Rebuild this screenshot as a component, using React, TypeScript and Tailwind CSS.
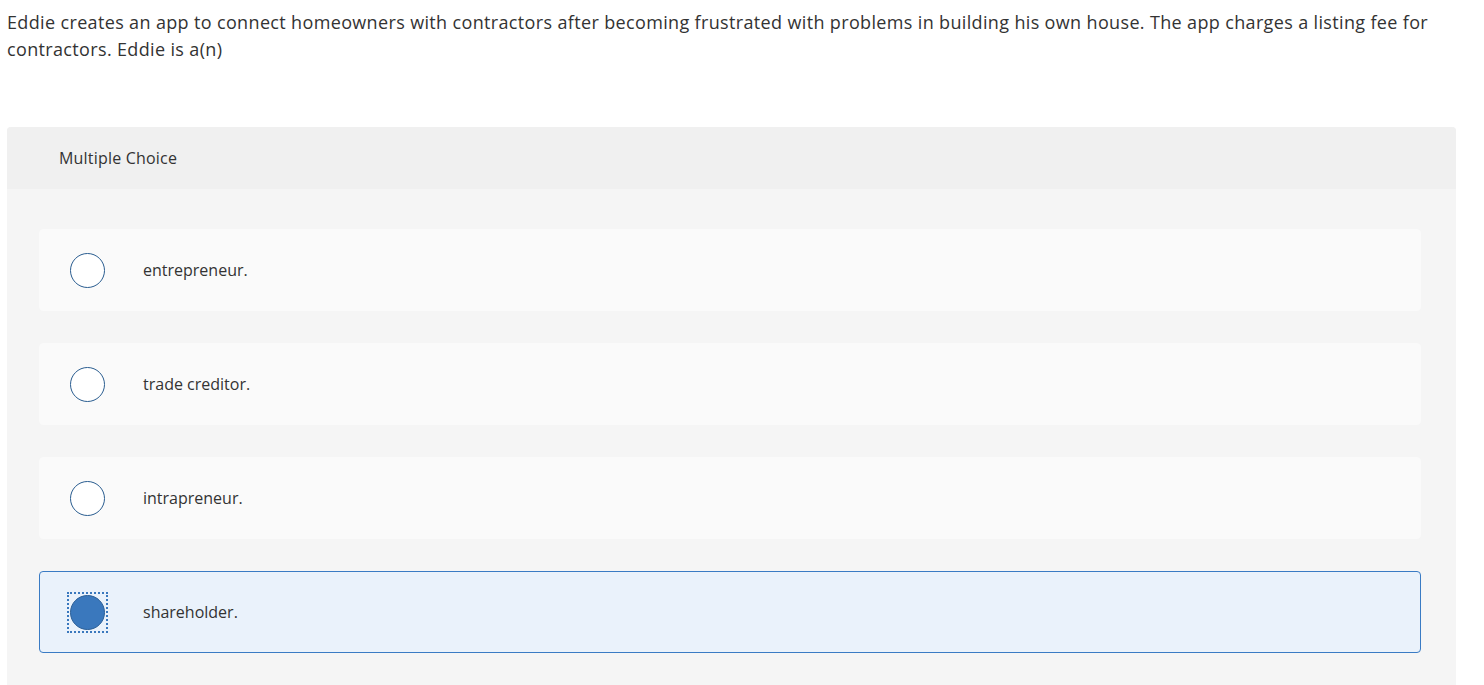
import React, { useState } from 'react';

const options = ['entrepreneur.', 'trade creditor.', 'intrapreneur.', 'shareholder.'];

export default function App() {
  const [selected, setSelected] = useState(3);

  return (
    <div className="min-h-screen bg-white text-[#333] font-['Open_Sans','Liberation_Sans',sans-serif]">
      <p className="pl-[7px] pr-[40px] pt-[9px] text-[18px] leading-[27px] tracking-[0.35px] text-[#333]">
        Eddie creates an app to connect homeowners with contractors after becoming frustrated with problems in building
        his own house. The app charges a listing fee for contractors. Eddie is a(n)
      </p>

      <div className="ml-[7px] mr-[28px] mt-[64px] rounded-t-[4px] bg-[#f5f5f5]">
        <div className="flex h-[62px] items-center rounded-t-[4px] bg-[#f0f0f0] pl-[52px] text-[16px] tracking-[0.2px] text-[#333]">
          Multiple Choice
        </div>
        <div className="flex flex-col gap-[32px] pl-[32px] pr-[35px] pt-[40px] pb-[40px]">
          {options.map((label, i) => {
            const active = selected === i;
            return (
              <button
                key={label}
                onClick={() => setSelected(i)}
                className={`flex h-[82px] items-center rounded-[4px] border pl-[27px] text-left ${
                  active ? 'border-[#3a7bc4] bg-[#eaf2fb]' : 'border-[#fafafa] bg-[#fafafa]'
                }`}
              >
                <span
                  className={`flex h-[41px] w-[41px] items-center justify-center ${
                    active ? 'outline-2 outline-dotted outline-[#3a78bd] -outline-offset-2' : ''
                  }`}
                >
                  <span
                    className={`block h-[35px] w-[35px] rounded-full border-[1.5px] ${
                      active ? 'border-[#2b5f97] bg-[#3a78bd]' : 'border-[#2a5d90] bg-white'
                    }`}
                  />
                </span>
                <span className="ml-[35px] text-[16px] text-[#333]">{label}</span>
              </button>
            );
          })}
        </div>
      </div>
    </div>
  );
}
